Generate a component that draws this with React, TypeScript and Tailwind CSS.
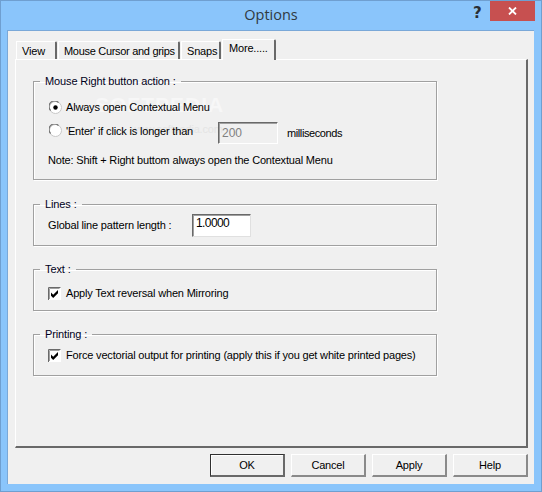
import React from "react";

const face = "bg-[#f0f0f0]";

function Tab({ label, active, className }: { label: string; active?: boolean; className: string }) {
  return (
    <div
      className={`${className} ${
        active ? "h-[21px] -mb-px z-10 pt-[1px] pl-[6px]" : "h-[18px] pt-[2px] pl-[5px]"
      } bg-[#f0f0f0] border-t border-l border-t-white border-l-white border-r-2 border-r-[#696969] rounded-tr-[2px] leading-[14px] whitespace-nowrap text-black`}
    >
      {label}
    </div>
  );
}

function Group({ title, className, children }: { title: string; className: string; children: React.ReactNode }) {
  return (
    <fieldset className={`${className} min-w-0 relative border border-[#a0a0a0] shadow-[1px_1px_0_#ffffff,inset_1px_1px_0_#ffffff] ml-[17px] w-[404px] pl-[11px]`}>
      <legend className="-ml-[5px] px-[5px] leading-[14px] tracking-[-0.12px] text-[#000020]">{title}</legend>
      {children}
    </fieldset>
  );
}

function Radio({ checked, className }: { checked?: boolean; className?: string }) {
  return (
    <svg width="13" height="13" viewBox="0 0 13 13" className={`shrink-0 ${className ?? ""}`}>
      <circle cx="6.5" cy="6.5" r="6" fill="#ffffff" stroke="#c8c8c8" />
      <path d="M1.6 9.5A5.5 5.5 0 0 1 9.5 1.6" fill="none" stroke="#707070" strokeWidth="1.2" />
      {checked && <circle cx="6.5" cy="6.5" r="2.2" fill="#000000" />}
    </svg>
  );
}

function Check() {
  return (
    <svg width="13" height="13" viewBox="0 0 13 13" className="shrink-0">
      <rect x="0" y="0" width="13" height="13" fill="#ffffff" />
      <path d="M0.5 13V0.5H12.5" fill="none" stroke="#6a6a6a" />
      <path d="M1.5 12V1.5H11.5" fill="none" stroke="#a0a0a0" />
      <path d="M3 5.6L5.2 7.8L10 3V6.2L5.2 11L3 8.8Z" fill="#000000" />
    </svg>
  );
}

function Btn({ label, def }: { label: string; def?: boolean }) {
  return (
    <div
      className={`w-[75px] h-[23px] flex items-center justify-center ${face} ${
        def
          ? "border border-[#303030] border-r-2 border-b-2 border-r-[#696969] border-b-[#696969] shadow-[inset_1px_1px_0_#ffffff]"
          : "border border-t-white border-l-white border-r-2 border-b-2 border-r-[#8a8a8a] border-b-[#8a8a8a]"
      } text-black`}
    >
      {label}
    </div>
  );
}

export default function App() {
  return (
    <div
      className="w-[542px] h-[492px] bg-[#8ac5fb] border border-[#6f9fd0] flex flex-col overflow-hidden"
      style={{ fontFamily: '"Liberation Sans", Arial, sans-serif' }}
    >
      <div className="h-[29px] shrink-0 relative">
        <div className="text-center text-[14.5px] leading-[28px] text-[#303a42]" style={{ fontFamily: '"Open Sans", sans-serif' }}>
          Options
        </div>
        <div className="absolute left-[472px] top-[4px] text-[15px] leading-[16px] font-bold text-[#2a2f35]" style={{ fontFamily: '"DejaVu Sans", sans-serif' }}>
          ?
        </div>
        <div className="absolute left-[489px] top-0 w-[45px] h-[20px] bg-[#c75050] flex items-center justify-center">
          <svg width="9" height="8" viewBox="0 0 9 8">
            <path d="M1 0.5L8 7.5M8 0.5L1 7.5" stroke="#ffffff" strokeWidth="1.8" />
          </svg>
        </div>
      </div>
      <div className={`ml-[6px] w-[527px] h-[454px] ${face} border-t border-l border-[#7aa8d8] flex flex-col text-[11px] tracking-[-0.18px] text-black`}>
        <div className="h-[28px] shrink-0 pl-[8px] flex items-end">
          <Tab label="View" className="w-[41px] mr-[1px]" />
          <Tab label="Mouse Cursor and grips" className="w-[122px] mr-[1px] tracking-[-0.3px]" />
          <Tab label="Snaps" className="w-[40px] mr-[1px]" />
          <Tab label="More....." active className="w-[54px]" />
        </div>
        <div className="ml-[7px] w-[513px] h-[389px] shrink-0 border-t border-l border-t-white border-l-white border-r-2 border-b-2 border-r-[#696969] border-b-[#696969] flex flex-col relative">
          <div className="absolute left-[79px] top-[33px] text-[21px] leading-[24px] font-bold tracking-[1px] text-[#f7f7f7] pointer-events-none">
            SOFTPEDIA
          </div>
          <div className="absolute left-[115px] top-[62px] text-[11px] leading-[14px] text-[#e4e4e4] pointer-events-none">
            www.softpedia.com
          </div>
          <Group title="Mouse Right button action :" className="mt-[14px] h-[106px]">
            <div className="relative flex items-center h-[13px] mt-[13px] ml-[4px] gap-[4px]">
              <Radio checked />
              <span>Always open Contextual Menu</span>
            </div>
            <div className="relative flex items-start h-[22px] mt-[8px] ml-[4px] gap-[4px]">
              <Radio className="mt-[2px]" />
              <span className="w-[148px] whitespace-nowrap leading-[14px] mt-[2px]">'Enter' if click is longer than</span>
              <div className="w-[60px] h-[22px] border border-t-[#696969] border-l-[#696969] border-r-white border-b-white shadow-[inset_1px_1px_0_#a0a0a0] pl-[3px] text-[12px] tracking-normal text-[#808080] leading-[20px]">
                200
              </div>
              <span className="ml-[5px] mt-[4px] whitespace-nowrap leading-[14px] tracking-[-0.4px]">milliseconds</span>
            </div>
            <div className="relative mt-[9px] ml-[3px] whitespace-nowrap leading-[14px]">Note: Shift + Right buttom always open the Contextual Menu</div>
          </Group>
          <Group title="Lines :" className="mt-[17px] h-[49px]">
            <div className="flex items-center ml-[3px] mt-[3px]">
              <span className="w-[144px] whitespace-nowrap">Global line pattern length :</span>
              <div className="w-[59px] h-[23px] bg-white border border-t-[#696969] border-l-[#696969] border-r-[#e0e0e0] border-b-[#e0e0e0] shadow-[inset_1px_1px_0_#a0a0a0] pl-[3px] text-[12px] tracking-[-0.6px] leading-[16px]">
                1.0000
              </div>
            </div>
          </Group>
          <Group title="Text :" className="mt-[16px] h-[49px]">
            <div className="flex items-center ml-[3px] mt-[11px] gap-[5px] h-[13px]">
              <Check />
              <span>Apply Text reversal when Mirroring</span>
            </div>
          </Group>
          <Group title="Printing :" className="mt-[16px] h-[49px]">
            <div className="flex items-center ml-[3px] mt-[8px] gap-[5px] h-[13px]">
              <Check />
              <span className="whitespace-nowrap">Force vectorial output for printing (apply this if you get white printed pages)</span>
            </div>
          </Group>
        </div>
        <div className="flex justify-end gap-[6px] pr-[6px] mt-[6px]">
          <Btn label="OK" def />
          <Btn label="Cancel" />
          <Btn label="Apply" />
          <Btn label="Help" />
        </div>
      </div>
    </div>
  );
}
